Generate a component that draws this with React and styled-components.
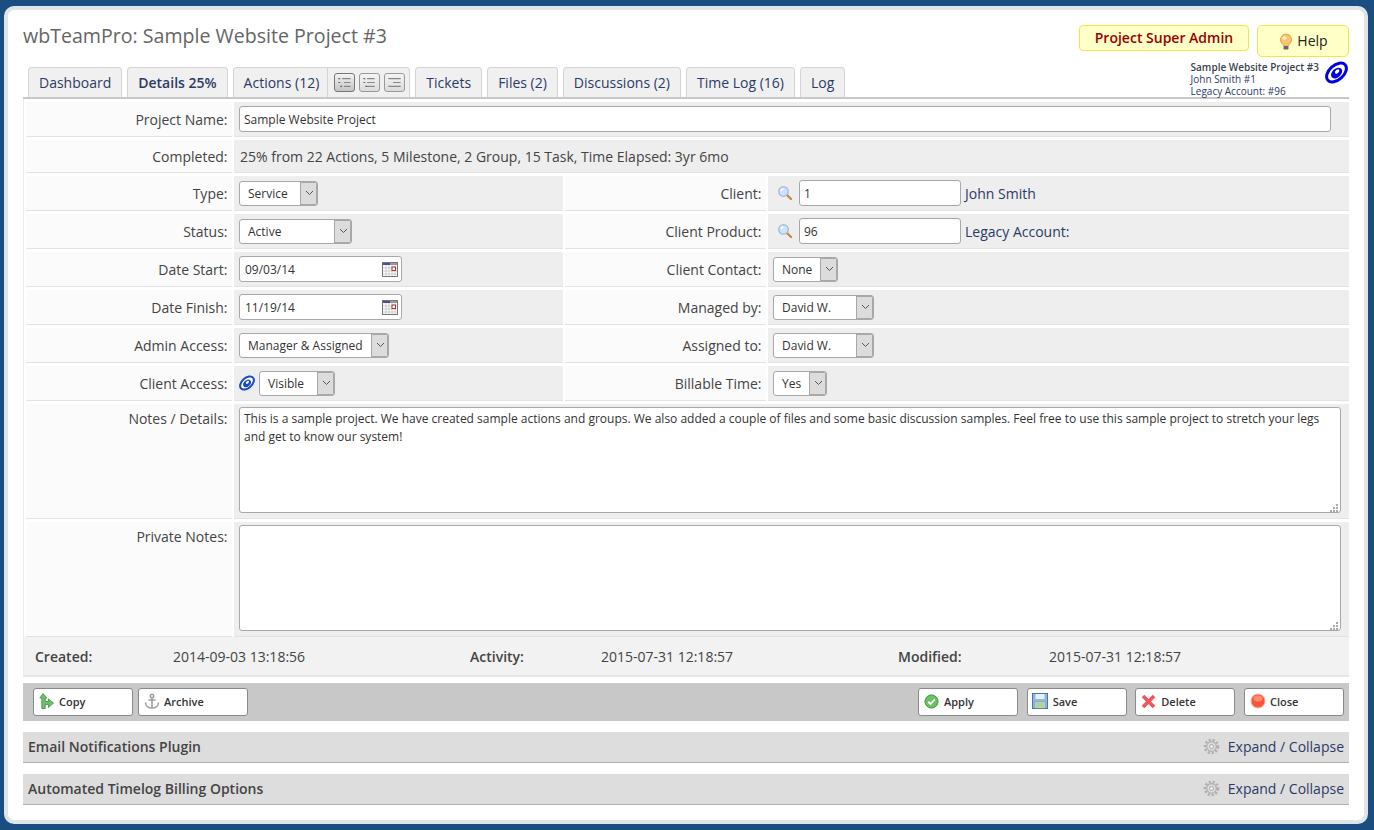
import React from "react"
import styled, { createGlobalStyle } from "styled-components"

const GlobalStyle = createGlobalStyle`
html, body {
  margin: 0;
  padding: 0;
  height: 830px;
  overflow: hidden;
  background: #1a4e80;
  font-family: "Open Sans", "Liberation Sans", sans-serif;
  color: #444;
}
* { box-sizing: border-box; }
`

const Page = styled.div`
height: 830px;
padding: 6px 6px 6px 4px;
`

const Panel = styled.div`
height: 818px;
background: #fff;
border: 4px solid #dfe4e8;
border-radius: 10px;
padding: 11px 15px 0 15px;
`

const Header = styled.div`
display: flex;
justify-content: space-between;
height: 47px;
`

const Title = styled.h1`
margin: 0;
font-size: 19.6px;
font-weight: 400;
line-height: 28px;
padding-top: 1px;
color: #666;
`

const HeaderRight = styled.div`
display: flex;
align-items: flex-start;
gap: 8px;
padding-top: 4px;
`

const RoleBadge = styled.div`
width: 170px;
height: 26px;
background: #ffffc8;
border: 1px solid #f2e64a;
border-radius: 4px;
color: #990000;
font-size: 14px;
font-weight: 600;
line-height: 23px;
text-align: center;
`

const HelpButton = styled.div`
width: 92px;
height: 32px;
background: #ffffc8;
border: 1px solid #f2e64a;
border-radius: 5px;
color: #222;
font-size: 14px;
line-height: 30px;
display: flex;
align-items: center;
justify-content: center;
gap: 3px;
`

const TabBar = styled.div`
display: flex;
justify-content: space-between;
height: 32px;
margin-top: -1px;
border-bottom: 2px solid #c8c8c8;
padding-left: 5px;
position: relative;
`

const Tabs = styled.div`
display: flex;
gap: 5px;
`

const Tab = styled.div`
height: 30px;
padding: 0 10px;
background: #f0f0f0;
border: 1px solid #d4d4d4;
border-bottom: none;
border-radius: 4px 4px 0 0;
color: #2c3a66;
font-size: 14px;
font-weight: ${p => (p.$active ? 600 : 400)};
line-height: 30px;
white-space: nowrap;
display: flex;
`

const TabTools = styled.div`
display: flex;
align-items: center;
gap: 4px;
margin: 0 -10px 0 8px;
padding: 0 4px 0 6px;
border-left: 1px solid #d4d4d4;
`

const ToolButton = styled.div`
width: 21px;
height: 19px;
background: linear-gradient(#f4f4f4, ${p => (p.$active ? "#c4c4c4" : "#dcdcdc")});
border: 1px solid ${p => (p.$active ? "#777" : "#999")};
border-radius: 3px;
display: flex;
align-items: center;
justify-content: center;
`

const ProjectInfo = styled.div`
position: absolute;
right: 30px;
top: -6px;
font-size: 10px;
line-height: 12px;
color: #2c3a66;
white-space: nowrap;
`

const ProjectInfoTitle = styled.div`
font-weight: 600;
color: #3a3f50;
`

const EyeSpot = styled.div`
position: absolute;
right: 1px;
top: -6px;
`

const Form = styled.div`
display: flex;
flex-direction: column;
padding-left: 2px;
border-left: 1px solid #ececec;
background: #fff;
`

const Row = styled.div`
display: grid;
grid-template-columns: 206px 2px 1fr;
height: ${p => p.$h || 38}px;
padding-top: 3px;
`

const Label = styled.div`
background: #fbfbfb;
border-bottom: 1px solid #e2e2e2;
padding: ${p => (p.$top ? "5px" : "0")} 4.5px 0 0;
display: flex;
align-items: ${p => (p.$top ? "flex-start" : "center")};
justify-content: flex-end;
font-size: 14px;
color: #444;
`

const Value = styled.div`
background: #eee;
border-bottom: 1px solid #e2e2e2;
padding: ${p => (p.$top ? "3px" : "0")} 8px 0 5px;
display: flex;
align-items: ${p => (p.$top ? "flex-start" : "center")};
font-size: 14px;
gap: 4px;
min-width: 0;
position: relative;
`

const PlainValue = styled.span`
padding-left: 1px;
`

const Split = styled.div`
display: grid;
grid-template-columns: 329px 201px 1fr;
column-gap: 2px;
min-width: 0;
`

const TextInput = styled.input`
width: ${p => p.$w}px;
height: 26px;
border: 1px solid #a8a8a8;
border-radius: 3px;
background: #fff;
padding: 0 4px;
font: 12px "Open Sans", sans-serif;
color: #333;
outline: none;
flex: none;
`

const DateBox = styled.div`
width: 163px;
height: 26px;
border: 1px solid #a8a8a8;
border-radius: 3px;
background: #fff;
padding: 0 3px 0 5px;
display: flex;
align-items: center;
justify-content: space-between;
font-size: 12px;
color: #333;
`

const SelectBox = styled.div`
width: ${p => p.$w}px;
height: 25px;
border: 1px solid #a8a8a8;
border-radius: 3px;
background: #fff;
display: flex;
flex: none;
font-size: 12px;
color: #333;
overflow: hidden;
`

const SelectText = styled.div`
flex: 1;
padding-left: 8px;
line-height: 23px;
white-space: nowrap;
`

const SelectArrow = styled.div`
width: 17px;
background: #dcdcdc;
border-left: 1px solid #a8a8a8;
box-shadow: inset -1px 0 #a8a8a8, inset 0 1px #a8a8a8, inset 0 -1px #a8a8a8;
display: flex;
align-items: center;
justify-content: center;
flex: none;
`

const NameText = styled.span`
color: #2c3a66;
font-size: 14px;
`

const IconSlot = styled.div`
width: 22px;
height: 20px;
flex: none;
display: flex;
align-items: center;
justify-content: flex-end;
padding-right: 2px;
`

const Notes = styled.textarea`
width: 100%;
height: 106px;
border: 1px solid #a8a8a8;
border-radius: 3px;
background: #fff;
padding: 2px 4px;
font: 12px/18px "Open Sans", sans-serif;
color: #333;
outline: none;
resize: none;
`

const Grip = styled.svg`
position: absolute;
right: 10px;
bottom: 5px;
`

const Footer = styled.div`
display: grid;
grid-template-columns: 138px 297px 131px 297px 151px 1fr;
height: 40px;
padding-left: 11px;
background: #f2f2f2;
border-left: 1px solid #ececec;
border-bottom: 2px solid #e6e6e6;
align-items: center;
font-size: 14px;
`

const FooterKey = styled.div`
font-weight: 600;
color: #444;
`

const Toolbar = styled.div`
display: flex;
justify-content: space-between;
height: 38px;
margin-top: 6px;
background: #c8c8c8;
padding: 5px 5px 0 10px;
`

const ButtonGroup = styled.div`
display: flex;
gap: ${p => p.$gap || 5}px;
`

const ActionButton = styled.div`
width: ${p => p.$w || 100}px;
height: 28px;
background: #fff;
border: 1px solid #8a8a8a;
border-radius: 3px;
display: flex;
align-items: center;
gap: 4px;
padding: 0 0 2px 4px;
font-size: 11px;
font-weight: 600;
color: #333;
`

const ButtonIcon = styled.div`
width: 17px;
height: 18px;
flex: none;
display: flex;
align-items: center;
justify-content: center;
`

const Section = styled.div`
display: flex;
align-items: center;
justify-content: space-between;
height: 31px;
margin-top: ${p => p.$mt}px;
padding: 0 5px 2px;
background: #ddd;
border-bottom: 1px solid #b0b0b0;
font-size: 14px;
`

const SectionTitle = styled.div`
font-weight: 600;
color: #444;
`

const SectionLink = styled.div`
display: flex;
align-items: center;
gap: 8px;
color: #2c3a66;
`

const Chevron = () => (
  <svg width="9" height="6" viewBox="0 0 9 6">
    <path d="M1 1l3.5 3.5L8 1" fill="none" stroke="#555" strokeWidth="1" />
  </svg>
)

const Select = ({ w, children }) => (
  <SelectBox $w={w}>
    <SelectText>{children}</SelectText>
    <SelectArrow><Chevron /></SelectArrow>
  </SelectBox>
)

const Calendar = () => (
  <svg width="16" height="15" viewBox="0 0 16 15">
    <rect x="0.5" y="0.5" width="15" height="14" fill="#fff" stroke="#777" />
    <rect x="1" y="1" width="7" height="2" fill="#4a4aa8" />
    <rect x="8" y="1" width="7" height="2" fill="#999" />
    <path d="M1 6h14M1 9h14M1 12h14M4 3v11M7 3v11M10 3v11M13 3v11" stroke="#ccc" fill="none" />
    <rect x="10" y="5" width="3.5" height="3.5" fill="#fff" stroke="#a33" />
  </svg>
)

const Magnifier = () => (
  <svg width="16" height="16" viewBox="0 0 16 16">
    <path d="M9.5 9.5l4.5 4.5" stroke="#c98a3e" strokeWidth="2.4" strokeLinecap="round" />
    <circle cx="6.5" cy="6.5" r="4.8" fill="#cfe3f7" stroke="#9dbbdc" strokeWidth="1.3" />
    <path d="M4 6a3 3 0 0 1 2.5-2.2" stroke="#fff" fill="none" strokeWidth="1.2" />
  </svg>
)

const Bulb = () => (
  <svg width="16" height="17" viewBox="0 0 15 17">
    <path d="M7.5 1a5.6 5.6 0 0 0-3.4 10c.6.5.9 1.2.9 2h5c0-.8.3-1.5.9-2a5.6 5.6 0 0 0-3.4-10z" fill="#f9c470" stroke="#e9a545" />
    <ellipse cx="6" cy="5" rx="2.4" ry="1.8" fill="#ffeec8" />
    <rect x="5" y="13" width="5" height="3.4" rx="1" fill="#666" />
  </svg>
)

const Eye = ({ size = 23, color = "#0000e0" }) => (
  <svg width={size} height={size} viewBox="0 0 23 23">
    <g transform="rotate(-42 11.5 11.5)">
      <ellipse cx="11.5" cy="11.5" rx="11.6" ry="7.2" fill="#fff" stroke={color} strokeWidth="3" />
      <ellipse cx="11.2" cy="12" rx="6.4" ry="4.4" fill={color} />
      <ellipse cx="12.6" cy="11.2" rx="2.6" ry="1.6" fill="#fff" />
    </g>
  </svg>
)

const listLines = {
  left: "M7 5h9M9 9h7M9 13h7",
  middle: "M7 5h8M7 9h8M7 13h8",
  right: "M3 5h13M8 9h8M3 13h13",
}

const ListIcon = ({ kind }) => (
  <svg width="19" height="17" viewBox="0 0 19 18">
    <path d={listLines[kind]} stroke="#888" strokeWidth="1.3" fill="none" />
    {kind !== "right" && <path d="M3 5h2M3 9h2M5 13h2" stroke="#666" strokeWidth="1.3" fill="none" />}
  </svg>
)

const CopyIcon = () => (
  <svg width="15" height="16" viewBox="0 0 15 16">
    <path d="M4 .5L.8 5h2v10.500h3.400V11.500h3.300V14.500L14.500 10 9.500 6v2.500H6.200V5h1.800z" fill="#6fbf6a" stroke="#3f8f45" strokeWidth="0.8" />
  </svg>
)

const AnchorIcon = () => (
  <svg width="16" height="17" viewBox="0 0 16 17">
    <g fill="none" stroke="#a0a0a0" strokeWidth="1.6">
      <circle cx="8" cy="3" r="1.7" />
      <path d="M8 5v10M4.500 7h7M1.500 9.500c0 3.500 3 5.500 6.500 5.500s6.500-2 6.500-5.500" />
    </g>
  </svg>
)

const ApplyIcon = () => (
  <svg width="15" height="15" viewBox="0 0 16 16">
    <circle cx="8" cy="8" r="7" fill="#6cc15f" stroke="#3f9340" />
    <path d="M4.500 8.200l2.500 2.300 4.500-4.700" stroke="#fff" strokeWidth="2" fill="none" />
  </svg>
)

const SaveIcon = () => (
  <svg width="16" height="16" viewBox="0 0 16 16">
    <rect x="0.500" y="0.500" width="15" height="15" fill="#8fb6e4" stroke="#4a76b0" />
    <rect x="3.500" y="1" width="9" height="5" fill="#e8f0fa" />
    <rect x="3" y="9" width="10" height="6" fill="#d6e8c8" stroke="#7faa6a" strokeWidth="0.600" />
    <path d="M4 11h8M4 13h8" stroke="#8fbb76" />
  </svg>
)

const DeleteIcon = () => (
  <svg width="15" height="15" viewBox="0 0 15 15">
    <path d="M2 2l11 11M13 2L2 13" stroke="#f0555e" strokeWidth="3.600" />
  </svg>
)

const CloseIcon = () => (
  <svg width="16" height="16" viewBox="0 0 16 16">
    <circle cx="8" cy="8" r="7" fill="#f8553a" stroke="#ffb3a0" />
    <ellipse cx="8" cy="5.500" rx="4.500" ry="3" fill="#ff8a70" />
  </svg>
)

const GearIcon = () => (
  <svg width="17" height="17" viewBox="0 0 17 17">
    <circle cx="8.500" cy="8.500" r="6.600" fill="none" stroke="#b0b0b0" strokeWidth="2.400" strokeDasharray="2.200 1.800" />
    <circle cx="8.500" cy="8.500" r="4.800" fill="#dcdcdc" stroke="#a0a0a0" />
    <circle cx="8.500" cy="8.500" r="2" fill="#f0f0f0" stroke="#aaa" />
  </svg>
)

const GripDots = () => (
  <Grip width="9" height="9" viewBox="0 0 9 9" fill="#aaa">
    <rect x="6" y="0" width="2" height="2" />
    <rect x="3" y="3" width="2" height="2" />
    <rect x="6" y="3" width="2" height="2" />
    <rect x="0" y="6" width="2" height="2" />
    <rect x="3" y="6" width="2" height="2" />
    <rect x="6" y="6" width="2" height="2" />
  </Grip>
)

const leftRight = [
  { label: "Type:", left: <Select w={79}>Service</Select>, rightLabel: "Client:", right: <><IconSlot><Magnifier /></IconSlot><TextInput $w={162} defaultValue="1" /><NameText>John Smith</NameText></> },
  { label: "Status:", left: <Select w={113}>Active</Select>, rightLabel: "Client Product:", right: <><IconSlot><Magnifier /></IconSlot><TextInput $w={162} defaultValue="96" /><NameText>Legacy Account:</NameText></> },
  { label: "Date Start:", left: <DateBox>09/03/14<Calendar /></DateBox>, rightLabel: "Client Contact:", right: <Select w={65}>None</Select> },
  { label: "Date Finish:", left: <DateBox>11/19/14<Calendar /></DateBox>, rightLabel: "Managed by:", right: <Select w={101}>David W.</Select> },
  { label: "Admin Access:", left: <Select w={150}>Manager &amp; Assigned</Select>, rightLabel: "Assigned to:", right: <Select w={101}>David W.</Select> },
  { label: "Client Access:", left: <><Eye size={16} color="#1a4cc0" /><Select w={76}>Visible</Select></>, rightLabel: "Billable Time:", right: <Select w={54}>Yes</Select> },
]

const tabsAfter = ["Tickets", "Files (2)", "Discussions (2)", "Time Log (16)", "Log"]

const leftButtons = [
  { name: "Copy", icon: <CopyIcon /> },
  { name: "Archive", icon: <AnchorIcon />, w: 110 },
]

const rightButtons = [
  { name: "Apply", icon: <ApplyIcon /> },
  { name: "Save", icon: <SaveIcon /> },
  { name: "Delete", icon: <DeleteIcon /> },
  { name: "Close", icon: <CloseIcon /> },
]

const notes = "This is a sample project. We have created sample actions and groups. We also added a couple of files and some basic discussion samples. Feel free to use this sample project to stretch your legs and get to know our system!"

function App() {
  return (
    <Page>
      <GlobalStyle />
      <Panel>
        <Header>
          <Title>wbTeamPro: Sample Website Project #3</Title>
          <HeaderRight>
            <RoleBadge>Project Super Admin</RoleBadge>
            <HelpButton><Bulb />Help</HelpButton>
          </HeaderRight>
        </Header>
        <TabBar>
          <Tabs>
            <Tab>Dashboard</Tab>
            <Tab $active>Details 25%</Tab>
            <Tab>
              Actions (12)
              <TabTools>
                <ToolButton $active><ListIcon kind="left" /></ToolButton>
                <ToolButton><ListIcon kind="middle" /></ToolButton>
                <ToolButton><ListIcon kind="right" /></ToolButton>
              </TabTools>
            </Tab>
            {tabsAfter.map(t => <Tab key={t}>{t}</Tab>)}
          </Tabs>
          <ProjectInfo>
            <ProjectInfoTitle>Sample Website Project #3</ProjectInfoTitle>
            <div>John Smith #1</div>
            <div>Legacy Account: #96</div>
          </ProjectInfo>
          <EyeSpot><Eye /></EyeSpot>
        </TabBar>
        <Form>
          <Row>
            <Label>Project Name:</Label>
            <span />
            <Value><TextInput $w={1092} defaultValue="Sample Website Project" /></Value>
          </Row>
          <Row $h={36}>
            <Label>Completed:</Label>
            <span />
            <Value><PlainValue>25% from 22 Actions, 5 Milestone, 2 Group, 15 Task, Time Elapsed: 3yr 6mo</PlainValue></Value>
          </Row>
          {leftRight.map(r => (
            <Row key={r.label}>
              <Label>{r.label}</Label>
              <span />
              <Split>
                <Value>{r.left}</Value>
                <Label>{r.rightLabel}</Label>
                <Value>{r.right}</Value>
              </Split>
            </Row>
          ))}
          <Row $h={118}>
            <Label $top>Notes / Details:</Label>
            <span />
            <Value $top><Notes defaultValue={notes} /><GripDots /></Value>
          </Row>
          <Row $h={118}>
            <Label $top>Private Notes:</Label>
            <span />
            <Value $top><Notes /><GripDots /></Value>
          </Row>
        </Form>
        <Footer>
          <FooterKey>Created:</FooterKey>
          <div>2014-09-03 13:18:56</div>
          <FooterKey>Activity:</FooterKey>
          <div>2015-07-31 12:18:57</div>
          <FooterKey>Modified:</FooterKey>
          <div>2015-07-31 12:18:57</div>
        </Footer>
        <Toolbar>
          <ButtonGroup>
            {leftButtons.map(b => (
              <ActionButton key={b.name} $w={b.w}><ButtonIcon>{b.icon}</ButtonIcon>{b.name}</ActionButton>
            ))}
          </ButtonGroup>
          <ButtonGroup $gap={8.7}>
            {rightButtons.map(b => (
              <ActionButton key={b.name}><ButtonIcon>{b.icon}</ButtonIcon>{b.name}</ActionButton>
            ))}
          </ButtonGroup>
        </Toolbar>
        <Section $mt={11}>
          <SectionTitle>Email Notifications Plugin</SectionTitle>
          <SectionLink><GearIcon />Expand / Collapse</SectionLink>
        </Section>
        <Section $mt={11}>
          <SectionTitle>Automated Timelog Billing Options</SectionTitle>
          <SectionLink><GearIcon />Expand / Collapse</SectionLink>
        </Section>
      </Panel>
    </Page>
  )
}

export default App
